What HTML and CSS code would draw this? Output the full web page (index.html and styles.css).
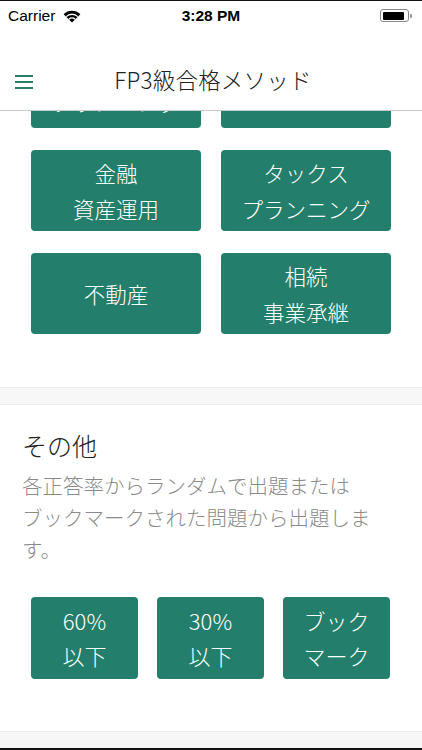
FILE: index.html
```html
<!DOCTYPE html>
<html lang="ja">
<head>
<meta charset="utf-8">
<title>FP3級合格メソッド</title>
<link rel="stylesheet" href="styles.css">
</head>
<body>
<div class="phone">
  <div class="statusbar">
    <div class="sb-left">
      <span class="carrier">Carrier</span>
      <svg class="wifi" width="18" height="13" viewBox="0 0 18 13">
        <path d="M9 12.5 L0.6 4.2 A12 12 0 0 1 17.4 4.2 Z" fill="#000"/>
        <path d="M3.2 6.6 A8.3 8.3 0 0 1 14.8 6.6" stroke="#fff" stroke-width="1.3" fill="none"/>
        <path d="M5.9 9.3 A4.4 4.4 0 0 1 12.1 9.3" stroke="#fff" stroke-width="1.3" fill="none"/>
      </svg>
    </div>
    <div class="time">3:28 PM</div>
    <div class="sb-right">
      <div class="battery"><div class="battery-fill"></div></div>
      <div class="battery-nub"></div>
    </div>
  </div>
  <header class="navbar">
    <div class="hamburger"><span></span><span></span><span></span></div>
    <h1 class="title">FP3級合格メソッド</h1>
  </header>
  <main class="content">
    <div class="grid2">
      <button class="btn">ライフ<br>プランニング</button>
      <button class="btn">リスク管理</button>
      <button class="btn">金融<br>資産運用</button>
      <button class="btn">タックス<br>プランニング</button>
      <button class="btn">不動産</button>
      <button class="btn">相続<br>事業承継</button>
    </div>
    <div class="band"></div>
    <section class="other">
      <h2 class="other-title">その他</h2>
      <p class="desc">各正答率からランダムで出題または<br>ブックマークされた問題から出題しま<br>す。</p>
      <div class="grid3">
        <button class="btn">60%<br>以下</button>
        <button class="btn">30%<br>以下</button>
        <button class="btn">ブック<br>マーク</button>
      </div>
    </section>
    <div class="band band-bottom"></div>
  </main>
</div>
</body>
</html>
```
FILE: styles.css
```css
* { box-sizing: border-box; }
html, body { margin: 0; padding: 0; background: #fff; }
body {
  width: 422px;
  height: 750px;
  overflow: hidden;
  font-family: "Noto Sans CJK JP", "Noto Sans", sans-serif;
}
.phone {
  width: 422px;
  height: 750px;
  display: flex;
  flex-direction: column;
  border-top: 1px solid #111;
  border-bottom: 2px solid #111;
  overflow: hidden;
}
.statusbar {
  height: 29px;
  display: flex;
  align-items: center;
  justify-content: space-between;
  padding: 0 10px 0 8px;
  position: relative;
  font-family: "Liberation Sans", Arial, sans-serif;
  color: #000;
}
.sb-left { display: flex; align-items: center; gap: 8px; }
.carrier { font-size: 15.5px; }
.wifi { display: block; margin-top: 1px; }
.time {
  position: absolute;
  left: 0; right: 0;
  text-align: center;
  font-size: 15.5px;
  font-weight: bold;
  pointer-events: none;
}
.sb-right { display: flex; align-items: center; }
.battery {
  width: 29px;
  height: 13px;
  border: 1px solid #888;
  border-radius: 3px;
  padding: 1.5px;
}
.battery-fill { width: 21px; height: 100%; background: #000; border-radius: 1px; }
.battery-nub { width: 2px; height: 4px; background: #999; border-radius: 0 1px 1px 0; margin-left: 1px; }
.navbar {
  height: 81px;
  border-bottom: 1px solid #c9c9c9;
  display: flex;
  align-items: center;
  justify-content: center;
  position: relative;
  padding-top: 18px;
}
.hamburger {
  position: absolute;
  left: 15px;
  top: 45px;
  width: 18px;
  display: flex;
  flex-direction: column;
  gap: 4px;
}
.hamburger span { display: block; height: 2px; background: #2a7f6b; }
.title {
  margin: 0;
  font-size: 22.5px;
  font-weight: 300;
  color: #222;
  letter-spacing: 0.2px;
  margin-left: 4px;
}
.content {
  flex: 1;
  overflow: hidden;
  display: flex;
  flex-direction: column;
}
.btn {
  border: none;
  margin: 0;
  background: #237f6b;
  color: #fff;
  border-radius: 4px;
  font-family: "Noto Sans CJK JP", "Noto Sans", sans-serif;
  font-size: 21.5px;
  font-weight: 300;
  line-height: 36px;
  height: 81px;
  padding: 0;
  display: flex;
  align-items: center;
  justify-content: center;
  text-align: center;
}
.grid2 {
  display: grid;
  grid-template-columns: 170px 170px;
  column-gap: 20px;
  row-gap: 22px;
  padding: 0 31px;
  margin-top: -64px;
  margin-bottom: 53px;
}
.grid2 .btn:first-child { padding-bottom: 8px; }
.band {
  height: 18px;
  flex: none;
  background: #f7f7f7;
  border-top: 1px solid #ebebeb;
  border-bottom: 1px solid #ebebeb;
}
.band-bottom { flex: 1; border-bottom: none; }
.other { padding: 23px 31px 52px 22px; }
.other-title {
  margin: 0;
  font-size: 25px;
  line-height: 34px;
  font-weight: 300;
  color: #222;
}
.desc {
  margin: 7px 0 0;
  font-size: 20.5px;
  line-height: 32px;
  font-weight: 300;
  color: #8a8a8a;
}
.grid3 {
  display: grid;
  grid-template-columns: 107px 107px 107px;
  column-gap: 19px;
  margin: 32px 0 0 9px;
}
.grid3 .btn { height: 82px; line-height: 35px; font-size: 22px; }
```
